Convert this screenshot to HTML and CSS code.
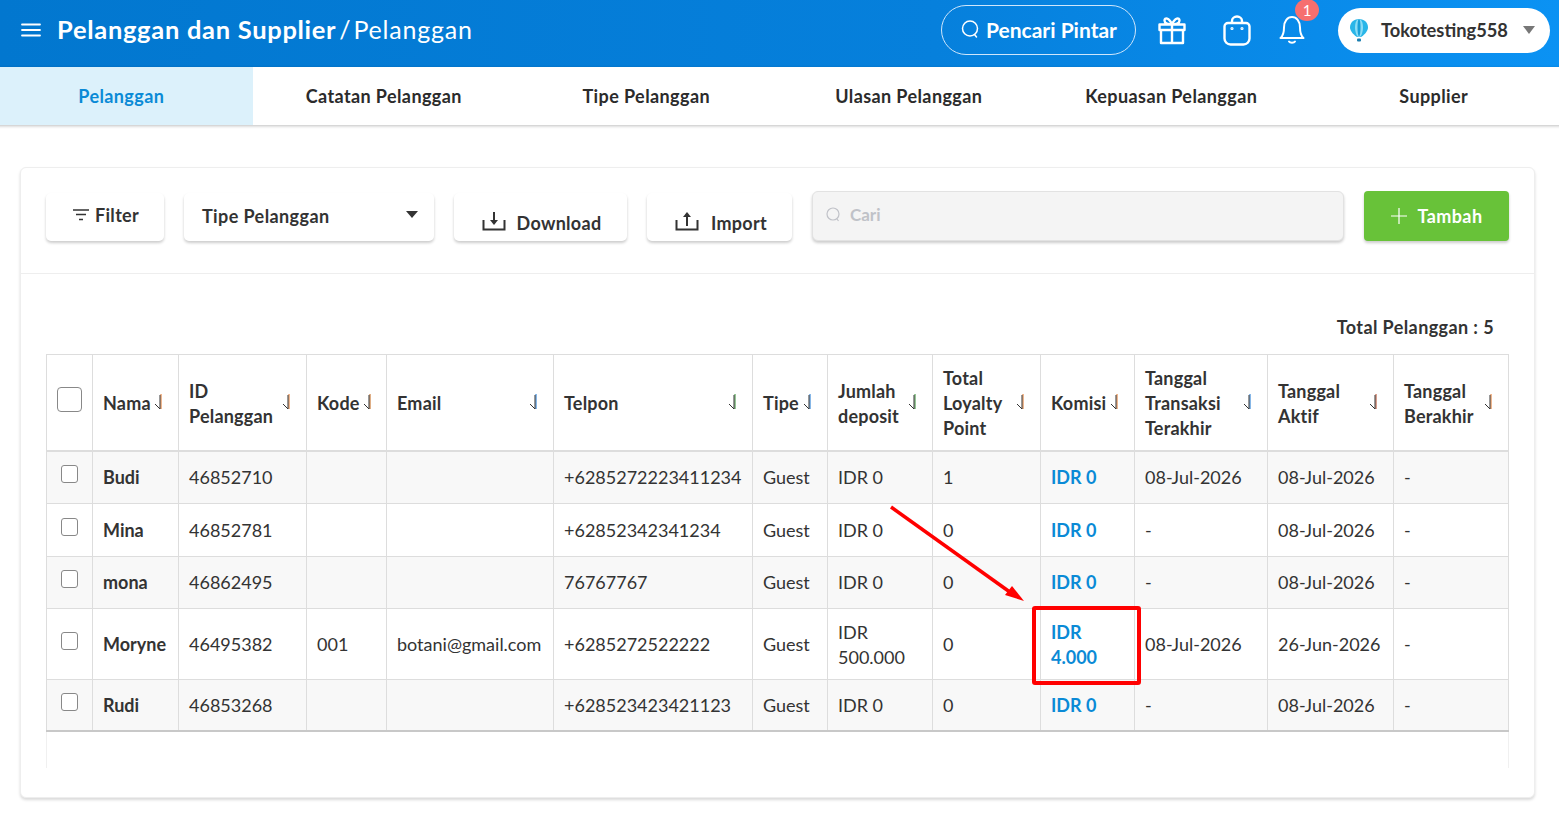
FILE: index.html
```html
<!DOCTYPE html>
<html lang="en">
<head>
    <meta charset="UTF-8">
    <title>Pelanggan</title>
    <link rel="stylesheet" href="styles.css">
</head>
<body>
    <header class="topbar">
        <div class="topbar-left">
            <svg class="menu-icon" width="20" height="14" viewBox="0 0 20 14"><path d="M1 1.500h18M1 7h18M1 12.500h18" stroke="#fff" stroke-width="1.800" stroke-linecap="round"/></svg>
            <h1 class="page-title"><b>Pelanggan dan Supplier</b><span class="slash">/</span><span>Pelanggan</span></h1>
        </div>
        <div class="topbar-right">
            <a class="smart-search">
                <svg width="20" height="20" viewBox="0 0 20 20" fill="none" stroke="#fff" stroke-width="1.500"><circle cx="10" cy="9.500" r="7.500"/><path d="M14.500 15.500l2 2.500" stroke-linecap="round"/></svg>
                Pencari Pintar
            </a>
            <svg class="gift-icon" width="28" height="29" viewBox="0 0 28 29" fill="none" stroke="#fff" stroke-width="2.400" stroke-linejoin="round"><path d="M3 14v13h22V14M1.500 8.500h25V14h-25zM14 8.500V27M14 8.500C10 8.500 6.500 7.500 6.500 4.500c0-3 4.500-3.500 7.500 4 3-7.500 7.500-7 7.500-4 0 3-3.500 4-7.500 4z"/></svg>
            <svg class="bag-icon" width="28" height="31" viewBox="0 0 28 31" fill="none" stroke="#fff" stroke-width="2.400"><path d="M5 8h18a3.500 3.500 0 0 1 3.500 3.500v12a6 6 0 0 1-6 6h-13a6 6 0 0 1-6-6v-12A3.500 3.500 0 0 1 5 8z"/><path d="M9 8V6a5 4.500 0 0 1 10 0v2"/><circle cx="9" cy="13.500" r="1" stroke-width="1.200"/><circle cx="19" cy="13.500" r="1" stroke-width="1.200"/></svg>
            <div class="bell-wrap">
                <svg width="26" height="30" viewBox="0 0 26 30" fill="none" stroke="#fff" stroke-width="2"><path d="M1.500 24c3-2.500 3.500-5 3.500-10.500C5 7 8.500 3 13 3s8 4 8 10.500c0 5.500.5 8 3.500 10.500z" stroke-linejoin="round"/><path d="M10 27.500c1 1.500 5 1.500 6 0" stroke-linecap="round"/></svg>
                <span class="bell-badge">1</span>
            </div>
            <div class="store-pill">
                <svg width="20" height="24" viewBox="0 0 20 24"><path d="M10 1C4.500 1 1 5 1 9.500 1 13.500 6 18 8 19h4c2-1 7-5.500 7-9.500C19 5 15.500 1 10 1z" fill="#29b6e8"/><path d="M10 1C7.500 1 6 5 6 9.500c0 4 1.500 8 3 9.500h2c1.500-1.500 3-5.500 3-9.500C14 5 12.500 1 10 1z" fill="#8adcf5"/><path d="M10 1c-1 0-1.500 4-1.500 8.500S9 17.500 10 19c1-1.500 1.500-5 1.500-9.500S11 1 10 1z" fill="#18a0d8"/><rect x="8" y="20.500" width="4" height="3" rx="1" fill="#1b7fb0"/></svg>
                <span class="store-name">Tokotesting558</span>
                <span class="store-caret"></span>
            </div>
        </div>
    </header>

    <nav class="tabs">
        <a class="tab active">Pelanggan</a>
        <a class="tab">Catatan Pelanggan</a>
        <a class="tab">Tipe Pelanggan</a>
        <a class="tab">Ulasan Pelanggan</a>
        <a class="tab">Kepuasan Pelanggan</a>
        <a class="tab">Supplier</a>
    </nav>

    <main class="card">
        <div class="toolbar">
            <button class="tool-btn btn-filter">
                <svg width="16" height="12" viewBox="0 0 16 12"><path d="M0 1h16M3 5.500h10M6 10.500h4" stroke="#333" stroke-width="1.600"/></svg>
                Filter
            </button>
            <div class="tool-btn btn-type">
                <span>Tipe Pelanggan</span>
                <span class="type-caret"></span>
            </div>
            <button class="tool-btn btn-down">
                <svg width="24" height="20" viewBox="0 0 24 20" fill="none" stroke="#333" stroke-width="2"><path d="M1.500 9v9.500h21V9"/><path d="M12 1v11"/><path d="M8 9h8l-4 5z" fill="#333" stroke="none"/></svg>
                Download
            </button>
            <button class="tool-btn btn-import">
                <svg width="24" height="20" viewBox="0 0 24 20" fill="none" stroke="#333" stroke-width="2"><path d="M1.500 9v9.500h21V9"/><path d="M12 5v10"/><path d="M8 6h8l-4-5z" fill="#333" stroke="none"/></svg>
                Import
            </button>
            <div class="search-box">
                <svg width="15" height="16" viewBox="0 0 15 16" fill="none" stroke="#c0c2c8" stroke-width="1.200"><circle cx="7" cy="7" r="6"/><path d="M11 12l1.500 2"/></svg>
                <span>Cari</span>
            </div>
            <button class="add-btn">
                <svg width="16" height="16" viewBox="0 0 16 16"><path d="M8 0v16M0 8h16" stroke="#fff" stroke-width="1.200"/></svg>
                Tambah
            </button>
        </div>

        <div class="card-body">
            <div class="total-line">Total Pelanggan : 5</div>
            <div class="table-wrap">
                <table class="data-table">
                    <colgroup>
                        <col class="c1"><col class="c2"><col class="c3"><col class="c4"><col class="c5"><col class="c6"><col class="c7"><col class="c8"><col class="c9"><col class="c10"><col class="c11"><col class="c12"><col class="c13">
                    </colgroup>
                    <thead id="tableHead"></thead>
                    <tbody id="tableBody"></tbody>
                </table>
            </div>
            <div class="table-foot"></div>
        </div>
    </main>

    <!-- red annotation drawn on top of the screenshot -->
    <svg class="annotation" width="280" height="200" viewBox="0 0 280 200">
        <path d="M1 2L124 90" stroke="#f00" stroke-width="3.500" fill="none"/>
        <path d="M134 96L115 90L122 81z" fill="#f00"/>
        <rect x="144" y="103" width="105" height="75" fill="none" stroke="#f00" stroke-width="4" rx="1"/>
    </svg>

    <script src="table.js"></script>
</body>
</html>
```

FILE: styles.css
```css
* {
    box-sizing: border-box;
}
body {
    margin: 0;
    width: 1559px;
    height: 829px;
    overflow: hidden;
    position: relative;
    font-family: 'Lato', 'Noto Sans', sans-serif;
    font-size: 18px;
    background-color: #fff;
    color: #333;
}
.topbar {
    height: 67px;
    display: flex;
    align-items: center;
    justify-content: space-between;
    padding: 0 9px 7px 21px;
    background: linear-gradient(90deg, #0277cf 0%, #0680dc 60%, #0b92f3 100%);
    color: #fff;
}
.topbar-left {
    display: flex;
    align-items: center;
    gap: 16px;
}
.page-title {
    margin: 0 0 2px;
    font-size: 25px;
    font-weight: 400;
    letter-spacing: 0.8px;
    display: flex;
    align-items: center;
    white-space: nowrap;
}
.page-title b {
    font-weight: 700;
    font-size: 25.500px;
    letter-spacing: 0.7px;
}
.slash {
    margin: 0 2px 0 3px;
}
.topbar-right {
    display: flex;
    align-items: center;
}
.smart-search {
    width: 195px;
    height: 50px;
    border: 1px solid #cfe6fb;
    border-radius: 25px;
    display: flex;
    align-items: center;
    justify-content: center;
    gap: 6px;
    padding-bottom: 2px;
    font-size: 21px;
    font-weight: 700;
    white-space: nowrap;
    margin-right: 22px;
}
.gift-icon {
    margin-right: 37px;
}
.bag-icon {
    margin-right: 28px;
}
.bell-wrap {
    position: relative;
    display: flex;
    margin-right: 33px;
    margin-top: -2px;
}
.bell-badge {
    position: absolute;
    top: -15px;
    left: 16px;
    width: 24px;
    height: 22px;
    border-radius: 50%;
    background-color: #f66f6f;
    color: #fff;
    font-size: 15px;
    line-height: 22px;
    text-align: center;
}
.store-pill {
    width: 212px;
    height: 45px;
    background-color: #fff;
    border-radius: 23px;
    display: flex;
    align-items: center;
    padding: 0 15px 0 11px;
    color: #333;
}
.store-name {
    margin-left: 12px;
    font-size: 18.300px;
    font-weight: 700;
    flex: 1;
}
.store-caret {
    border-left: 6px solid transparent;
    border-right: 6px solid transparent;
    border-top: 8px solid #777;
}
.tabs {
    height: 58px;
    margin-left: -10px;
    width: 1575px;
    display: grid;
    grid-template-columns: repeat(6, 262.500px);
    box-shadow: 0 1px 3px rgba(0, 0, 0, 0.25);
    position: relative;
}
.tab {
    display: flex;
    align-items: center;
    justify-content: center;
    font-size: 18px;
    font-weight: 700;
    letter-spacing: 0.4px;
    color: #2b2b2b;
}
.tab.active {
    background-color: #dcf1fb;
    color: #0a8ad6;
}
.card {
    margin: 42px 24px 0 20px;
    height: 631px;
    background-color: #fff;
    border: 1px solid #eee;
    border-radius: 6px;
    box-shadow: 0 2px 3px rgba(0, 0, 0, 0.15);
}
.toolbar {
    height: 106px;
    padding: 23px 25px 0 25px;
    display: flex;
    align-items: flex-start;
    border-bottom: 1px solid #eee;
}
.tool-btn {
    height: 48px;
    margin-top: 2px;
    margin-right: 20px;
    background-color: #fff;
    border: none;
    border-radius: 5px;
    box-shadow: 0 2px 3px rgba(0, 0, 0, 0.2);
    font-family: inherit;
    font-size: 18px;
    font-weight: 700;
    letter-spacing: 0.3px;
    color: #333;
    display: flex;
    align-items: center;
    padding: 0;
}
.btn-filter {
    width: 118px;
    justify-content: center;
    gap: 6px;
    padding: 0 0 4px 2px;
}
.btn-type {
    width: 250px;
    justify-content: space-between;
    padding: 0 16px 2px 18px;
    letter-spacing: 0.4px;
}
.type-caret {
    border-left: 6px solid transparent;
    border-right: 6px solid transparent;
    border-top: 7px solid #333;
    margin-bottom: 4px;
}
.btn-down {
    width: 173px;
    justify-content: center;
    gap: 11px;
    padding: 11px 0 0 2px;
}
.btn-import {
    width: 145px;
    justify-content: center;
    gap: 12px;
    padding: 11px 0 0 3px;
}
.btn-down svg,
.btn-import svg {
    margin-bottom: 4px;
}
.search-box {
    width: 532px;
    height: 50px;
    background-color: #f4f4f4;
    border: 1px solid #e2e2e2;
    border-radius: 6px;
    box-shadow: 0 2px 3px rgba(0, 0, 0, 0.2);
    display: flex;
    align-items: center;
    gap: 9px;
    padding: 0 0 3px 13px;
    margin-right: 20px;
    color: #c0c2c8;
    font-size: 17px;
    font-weight: 700;
}
.add-btn {
    width: 145px;
    height: 50px;
    background-color: #68c239;
    border: none;
    border-radius: 4px;
    box-shadow: 0 2px 3px rgba(0, 0, 0, 0.2);
    color: #fff;
    font-family: inherit;
    font-size: 18px;
    font-weight: 700;
    letter-spacing: 0.4px;
    display: flex;
    align-items: center;
    justify-content: center;
    gap: 11px;
}
.card-body {
    padding: 0 25px;
}
.total-line {
    height: 80px;
    padding: 42px 15px 0 0;
    text-align: right;
    font-size: 18px;
    font-weight: 700;
    letter-spacing: 0.4px;
}
.data-table {
    width: 1462px;
    table-layout: fixed;
    border-collapse: collapse;
    font-size: 18px;
}
.c1 { width: 46px; }
.c2 { width: 86px; }
.c3 { width: 128px; }
.c4 { width: 80px; }
.c5 { width: 167px; }
.c6 { width: 199px; }
.c7 { width: 75px; }
.c8 { width: 105px; }
.c9 { width: 108px; }
.c10 { width: 94px; }
.c11 { width: 133px; }
.c12 { width: 126px; }
.c13 { width: 115px; }
.data-table th,
.data-table td {
    border: 1px solid #ddd;
    padding: 1px 10px 0;
    text-align: left;
    line-height: 25px;
    overflow: hidden;
}
.data-table th {
    height: 96px;
    padding-top: 3px;
    font-weight: 700;
    letter-spacing: 0.2px;
    border-bottom: 2px solid #ddd;
}
.data-table td {
    height: 52px;
}
.data-table td.tall {
    height: 71px;
}
.data-table tbody tr:nth-child(1) td,
.data-table tbody tr:nth-child(2) td {
    height: 53px;
}
.data-table tbody tr:nth-child(3) td {
    padding-top: 0;
}
.data-table tbody tr:nth-child(odd) {
    background-color: #f8f8f8;
}
.data-table tbody tr:last-child td {
    height: 51px;
    border-bottom: 2px solid #c8c8c8;
}
.data-table .check-col,
.data-table th.check-col {
    padding: 0;
    text-align: center;
}
.head-cell {
    display: flex;
    align-items: center;
    justify-content: space-between;
}
.sort-icon {
    flex-shrink: 0;
    margin: -3px 6px 0 3px;
}
.check {
    display: inline-block;
    width: 17px;
    height: 18px;
    background-color: #fff;
    border: 1px solid #888;
    border-radius: 3px;
    vertical-align: middle;
    margin-top: -10px;
}
.check.big {
    width: 25px;
    height: 25px;
    border-radius: 4px;
    margin-top: -10px;
}
.name-cell {
    font-weight: 700;
}
.money-link {
    color: #0a8ad6;
    font-weight: 700;
}
.table-foot {
    width: 1463px;
    height: 36px;
    border-left: 1px solid #f0f0f0;
    border-right: 1px solid #f0f0f0;
}
.annotation {
    position: absolute;
    left: 890px;
    top: 505px;
}
```

FILE: table.js
```js
const headers = [
    { label: 'Nama', color: '#e07020' },
    { label: 'ID<br>Pelanggan', color: '#e07020' },
    { label: 'Kode', color: '#c06010' },
    { label: 'Email', color: '#1070d0' },
    { label: 'Telpon', color: '#309030' },
    { label: 'Tipe', color: '#1070d0' },
    { label: 'Jumlah<br>deposit', color: '#309030' },
    { label: 'Total<br>Loyalty<br>Point', color: '#e07020' },
    { label: 'Komisi', color: '#e07020' },
    { label: 'Tanggal<br>Transaksi<br>Terakhir', color: '#1070d0' },
    { label: 'Tanggal<br>Aktif', color: '#b04020' },
    { label: 'Tanggal<br>Berakhir', color: '#e07020' }
];

const rows = [
    ['Budi', '46852710', '', '', '+6285272223411234', 'Guest', 'IDR 0', '1', 'IDR 0', '08-Jul-2026', '08-Jul-2026', '-'],
    ['Mina', '46852781', '', '', '+62852342341234', 'Guest', 'IDR 0', '0', 'IDR 0', '-', '08-Jul-2026', '-'],
    ['mona', '46862495', '', '', '76767767', 'Guest', 'IDR 0', '0', 'IDR 0', '-', '08-Jul-2026', '-'],
    ['Moryne', '46495382', '001', 'botani@gmail.com', '+6285272522222', 'Guest', 'IDR<br>500.000', '0', 'IDR<br>4.000', '08-Jul-2026', '26-Jun-2026', '-'],
    ['Rudi', '46853268', '', '', '+628523423421123', 'Guest', 'IDR 0', '0', 'IDR 0', '-', '08-Jul-2026', '-']
];

function sortIcon(color) {
    return `<svg class="sort-icon" width="8" height="16" viewBox="0 0 8 16" fill="none">
        <path d="M7 0v15" stroke="${color}" stroke-width="1"/>
        <path d="M6 1v14L1 10" stroke="#333" stroke-width="1"/>
    </svg>`;
}

let headHtml = '<tr><th class="check-col"><span class="check big"></span></th>';
headers.forEach(h => {
    headHtml += `<th><div class="head-cell"><span>${h.label}</span>${sortIcon(h.color)}</div></th>`;
});
document.getElementById('tableHead').innerHTML = headHtml + '</tr>';

let bodyHtml = '';
rows.forEach(row => {
    const tall = row[8].includes('<br>') ? ' class="tall"' : '';
    bodyHtml += `<tr><td class="check-col"><span class="check"></span></td>`;
    row.forEach((cell, i) => {
        let inner = cell;
        if (i === 0) inner = `<span class="name-cell">${cell}</span>`;
        if (i === 8) inner = `<span class="money-link">${cell}</span>`;
        bodyHtml += `<td${tall}>${inner}</td>`;
    });
    bodyHtml += '</tr>';
});
document.getElementById('tableBody').innerHTML = bodyHtml;
```
